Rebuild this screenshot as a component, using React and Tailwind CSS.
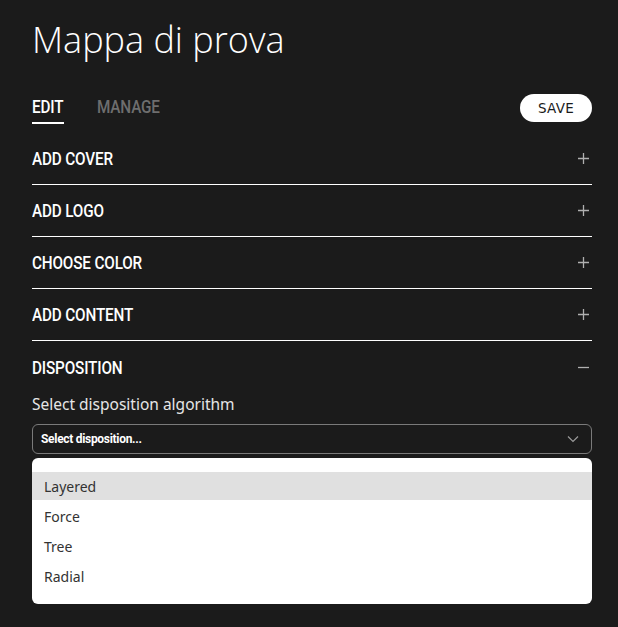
import React from "react";

const Plus = () => (
  <svg width="11" height="11" viewBox="0 0 11 11" className="text-[#b0b0b0]">
    <path d="M5.5 0v11M0 5.5h11" stroke="currentColor" strokeWidth="1.3" />
  </svg>
);
const Minus = () => (
  <svg width="11" height="11" viewBox="0 0 11 11" className="text-[#b0b0b0]">
    <path d="M0 5.5h11" stroke="currentColor" strokeWidth="1.3" />
  </svg>
);

const head = { fontFamily: "Roboto, 'Noto Sans', sans-serif" };

function Label({ children, className = "" }) {
  return (
    <span
      className={"inline-block origin-left scale-x-[0.85] text-[18px] font-medium tracking-[-0.2px] " + className}
      style={head}
    >
      {children}
    </span>
  );
}

function Section({ title, open, border = true }) {
  return (
    <div className={"flex h-[52px] items-center justify-between pr-[3px] " + (border ? "border-b border-white" : "")}>
      <Label className="text-white">{title}</Label>
      {open ? <Minus /> : <Plus />}
    </div>
  );
}

export default function App() {
  return (
    <div className="min-h-[627px] w-full bg-[#1b1b1b] pl-8 pr-[26px] pt-[14px]" style={{ fontFamily: "'Noto Sans', sans-serif" }}>
      <h1 className="text-[36px] font-light leading-[52px] text-white" style={{ fontFamily: "'Open Sans', sans-serif" }}>Mappa di prova</h1>
      <div className="mt-[29px] flex items-start justify-between">
        <div className="flex gap-[33px]">
          <div className="flex w-[32px] flex-col">
            <Label className="leading-[24px] text-white">EDIT</Label>
            <div className="mt-[3px] h-[2px] w-[32px] bg-white" />
          </div>
          <Label className="leading-[24px] text-[#6e6e6e]">MANAGE</Label>
        </div>
        <button className="mt-[-1px] h-[28px] w-[72px] rounded-full bg-white text-[13.5px] tracking-[0.3px] text-[#1b1b1b]" style={{ fontFamily: "'DejaVu Sans', sans-serif" }}>SAVE</button>
      </div>
      <div className="mt-[9px]">
        <Section title="ADD COVER" />
        <Section title="ADD LOGO" />
        <Section title="CHOOSE COLOR" />
        <Section title="ADD CONTENT" />
        <Section title="DISPOSITION" open border={false} />
      </div>
      <div className="text-[15.5px] leading-[22px] text-[#e6e6e6]">Select disposition algorithm</div>
      <div className="mt-[9px] flex h-[30px] items-center justify-between rounded-[6px] border border-[#7a7a7a] pl-[8px] pr-[12px]">
        <span className="text-[12px] font-bold tracking-[-0.3px] text-white" style={head}>Select disposition...</span>
        <svg width="12" height="8" viewBox="0 0 12 8" className="text-[#9a9a9a]">
          <path d="M1 1.5l5 5 5-5" fill="none" stroke="currentColor" strokeWidth="1.2" />
        </svg>
      </div>
      <div className="mt-[4px] rounded-[6px] bg-white py-[14px] text-[14px] text-[#333]">
        <div className="flex h-[28px] items-center bg-[#e0e0e0] px-3">Layered</div>
        <div className="flex h-[30px] items-center px-3 pt-[3px]">Force</div>
        <div className="flex h-[30px] items-center px-3 pt-[3px]">Tree</div>
        <div className="flex h-[30px] items-center px-3 pt-[3px]">Radial</div>
      </div>
    </div>
  );
}
